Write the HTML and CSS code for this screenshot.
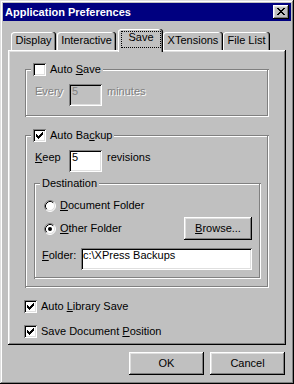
FILE: index.html
```html
<!DOCTYPE html>
<html>
<head>
<meta charset="utf-8">
<title>Application Preferences</title>
<link rel="stylesheet" href="styles.css">
</head>
<body>
<div class="window">
  <div class="titlebar">
    <span class="title">Application Preferences</span>
    <div class="close">
      <svg width="8" height="7" viewBox="0 0 8 7" shape-rendering="crispEdges"><path d="M0 0h2v1h-2zM6 0h2v1h-2zM1 1h2v1h-2zM5 1h2v1h-2zM2 2h4v1h-4zM3 3h2v1h-2zM2 4h4v1h-4zM1 5h2v1h-2zM5 5h2v1h-2zM0 6h2v1h-2zM6 6h2v1h-2z" fill="#000"/></svg>
    </div>
  </div>

  <div class="tabs">
    <div class="tab t-display">Display</div>
    <div class="tab t-interactive">Interactive</div>
    <div class="tab t-save active"><span class="focus">Save</span></div>
    <div class="tab t-xt">XTensions</div>
    <div class="tab t-files">File List</div>
  </div>

  <div class="panel">
    <div class="group g-autosave">
      <div class="legend">
        <span class="check"></span>
        <span>Auto <u>S</u>ave</span>
      </div>
      <div class="row field-row">
        <span class="lbl disabled">Every</span>
        <div class="edit small is-disabled">5</div>
        <span class="unit disabled">minutes</span>
      </div>
    </div>

    <div class="group g-backup">
      <div class="legend">
        <span class="check"><svg width="7" height="7" viewBox="0 0 7 7" shape-rendering="crispEdges"><path d="M0 2h1v3h-1zM1 3h1v3h-1zM2 4h1v3h-1zM3 3h1v3h-1zM4 2h1v3h-1zM5 1h1v3h-1zM6 0h1v3h-1z" fill="#000"/></svg></span>
        <span>Auto Ba<u>c</u>kup</span>
      </div>
      <div class="row field-row">
        <span class="lbl"><u>K</u>eep</span>
        <div class="edit small">5</div>
        <span class="unit">revisions</span>
      </div>

      <div class="group g-dest">
        <div class="legend legend-text">Destination</div>
        <div class="row radio-row r-doc">
          <span class="radio"><svg width="12" height="12" viewBox="0 0 12 12"><circle cx="6" cy="6" r="5" fill="#fff"/><path d="M2.11 9.89A5.5 5.5 0 0 1 9.89 2.11" stroke="#808080" fill="none"/><path d="M9.89 2.11A5.5 5.5 0 0 1 2.11 9.89" stroke="#fff" fill="none"/><path d="M2.82 9.18A4.5 4.5 0 0 1 9.18 2.82" stroke="#000" fill="none"/><path d="M9.18 2.82A4.5 4.5 0 0 1 2.82 9.18" stroke="#dfdfdf" fill="none"/></svg></span>
          <span><u>D</u>ocument Folder</span>
        </div>
        <div class="row radio-row r-other">
          <span class="radio"><svg width="12" height="12" viewBox="0 0 12 12"><circle cx="6" cy="6" r="5" fill="#fff"/><path d="M2.11 9.89A5.5 5.5 0 0 1 9.89 2.11" stroke="#808080" fill="none"/><path d="M9.89 2.11A5.5 5.5 0 0 1 2.11 9.89" stroke="#fff" fill="none"/><path d="M2.82 9.18A4.5 4.5 0 0 1 9.18 2.82" stroke="#000" fill="none"/><path d="M9.18 2.82A4.5 4.5 0 0 1 2.82 9.18" stroke="#dfdfdf" fill="none"/><circle cx="6" cy="6" r="2" fill="#000"/></svg></span>
          <span><u>O</u>ther Folder</span>
          <div class="btn browse"><u>B</u>rowse...</div>
        </div>
        <div class="row field-row r-folder">
          <span class="lbl folder-lbl"><u>F</u>older:</span>
          <div class="edit wide">c:\XPress Backups</div>
        </div>
      </div>
    </div>

    <div class="row chk-row">
      <span class="check"><svg width="7" height="7" viewBox="0 0 7 7" shape-rendering="crispEdges"><path d="M0 2h1v3h-1zM1 3h1v3h-1zM2 4h1v3h-1zM3 3h1v3h-1zM4 2h1v3h-1zM5 1h1v3h-1zM6 0h1v3h-1z" fill="#000"/></svg></span>
      <span>Auto <u>L</u>ibrary Save</span>
    </div>
    <div class="row chk-row">
      <span class="check"><svg width="7" height="7" viewBox="0 0 7 7" shape-rendering="crispEdges"><path d="M0 2h1v3h-1zM1 3h1v3h-1zM2 4h1v3h-1zM3 3h1v3h-1zM4 2h1v3h-1zM5 1h1v3h-1zM6 0h1v3h-1z" fill="#000"/></svg></span>
      <span>Save Document <u>P</u>osition</span>
    </div>
  </div>

  <div class="buttons">
    <div class="btn">OK</div>
    <div class="btn">Cancel</div>
  </div>
</div>
</body>
</html>
```

FILE: styles.css
```css
* {
  box-sizing: border-box;
}

body {
  margin: 0;
  font-family: "Liberation Sans", Arial, sans-serif;
  font-size: 11px;
  line-height: 13px;
  color: #000;
  background: #c0c0c0;
}

u {
  text-decoration-thickness: 1px;
  text-underline-offset: 1px;
}

.window {
  width: 294px;
  height: 384px;
  padding: 3px;
  background: #c0c0c0;
  display: flex;
  flex-direction: column;
  box-shadow: inset -1px -1px #000, inset 1px 1px #dfdfdf, inset -2px -2px #808080, inset 2px 2px #fff;
}

/* title bar */
.titlebar {
  height: 18px;
  flex: none;
  background: #000080;
  color: #fff;
  font-weight: bold;
  display: flex;
  align-items: center;
  padding-left: 2px;
}

.title {
  line-height: 18px;
}

.close {
  margin-left: auto;
  margin-right: 2px;
  width: 16px;
  height: 14px;
  padding: 3px 0 0 4px;
  background: #c0c0c0;
  box-shadow: inset -1px -1px #000, inset 1px 1px #fff, inset -2px -2px #808080, inset 2px 2px #dfdfdf;
}

.close svg,
.check svg,
.radio svg {
  display: block;
}

/* tabs */
.tabs {
  display: flex;
  align-items: flex-end;
  height: 21px;
  flex: none;
  margin: 8px 0 0 8px;
}

.tab {
  height: 18px;
  padding-top: 2px;
  text-align: center;
  background: #c0c0c0;
  border-radius: 3px 3px 0 0;
  box-shadow: inset -1px 0 #000, inset -2px 0 #808080, inset 1px 1px #fff;
}

.t-display { width: 45px; }
.t-interactive { width: 59px; margin-left: 1px; }
.t-save { width: 45px; margin-left: 2px; }
.t-xt { width: 60px; }
.t-files { width: 47px; }

.tab.active {
  height: 23px;
  margin-bottom: -2px;
  padding: 2px 2px 0 3px;
  position: relative;
  z-index: 1;
}

.focus {
  display: block;
  height: 17px;
  border: 1px dotted #000;
  line-height: 11px;
}

/* panel */
.panel {
  height: 295px;
  flex: none;
  margin: 0 5px;
  padding: 19px 0 0 17px;
  box-shadow: inset -1px -1px #000, inset 1px 1px #fff, inset -2px -2px #808080, inset 2px 2px #dfdfdf;
}

.group {
  display: flex;
  flex-direction: column;
  align-items: flex-start;
  box-shadow: inset 1px 1px #808080, inset -1px -1px #fff, inset -2px -2px #808080, inset 2px 2px #fff;
}

.g-autosave {
  width: 244px;
  padding-bottom: 11px;
}

.g-backup {
  width: 244px;
  margin-top: 18px;
  padding-bottom: 9px;
}

.g-dest {
  width: 227px;
  margin: 11px 0 0 9px;
  padding-bottom: 9px;
  align-items: stretch;
}

.legend {
  display: flex;
  align-items: center;
  gap: 4px;
  height: 13px;
  margin: -6px 0 0 6px;
  padding: 0 2px;
  background: #c0c0c0;
}

.g-dest .legend {
  align-self: flex-start;
}

.row {
  display: flex;
}

.field-row {
  align-items: baseline;
  margin: 8px 0 0 10px;
}

.lbl {
  width: 34px;
}

.unit {
  margin-left: 5px;
}

.disabled {
  color: #808080;
  text-shadow: 1px 1px #fff;
}

.edit {
  height: 22px;
  padding: 1px 3px 0;
  background: #fff;
  white-space: nowrap;
  box-shadow: inset 1px 1px #808080, inset -1px -1px #fff, inset 2px 2px #000, inset -2px -2px #dfdfdf;
}

.edit.small {
  width: 33px;
}

.edit.is-disabled {
  background: #c0c0c0;
  color: #808080;
}

.edit.wide {
  width: 171px;
  padding-left: 2px;
}

.radio-row {
  align-items: center;
  gap: 4px;
  margin: 0 9px 0 10px;
}

.r-doc {
  height: 13px;
  margin-top: 9px;
}

.r-other {
  margin-top: 5px;
}

.r-folder {
  margin: 8px 9px 0 8px;
}

.folder-lbl {
  width: 39px;
}

.radio {
  width: 12px;
  height: 12px;
  flex: none;
}

.check {
  width: 13px;
  height: 13px;
  flex: none;
  padding: 3px;
  background: #fff;
  box-shadow: inset 1px 1px #808080, inset -1px -1px #fff, inset 2px 2px #000, inset -2px -2px #dfdfdf;
}

.chk-row {
  align-items: center;
  gap: 4px;
  height: 13px;
  margin: 12px 0 0 -1px;
}

/* buttons */
.btn {
  width: 75px;
  height: 23px;
  padding-bottom: 1px;
  display: flex;
  align-items: center;
  justify-content: center;
  background: #c0c0c0;
  box-shadow: inset -1px -1px #000, inset 1px 1px #fff, inset -2px -2px #808080, inset 2px 2px #dfdfdf;
}

.btn.browse {
  width: 68px;
  margin-left: auto;
}

.buttons {
  display: flex;
  justify-content: flex-end;
  gap: 6px;
  margin: 7px 6px 0 0;
}
```
